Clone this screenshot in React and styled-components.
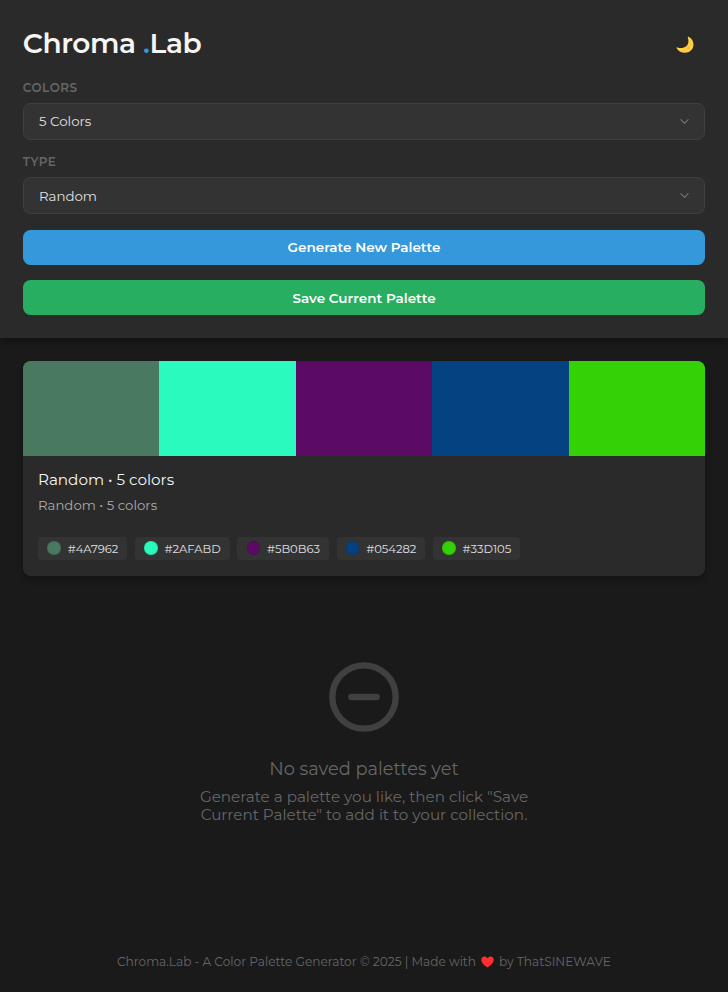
import React from 'react';
import styled, { createGlobalStyle } from 'styled-components';

const GlobalStyle = createGlobalStyle`
  * { box-sizing: border-box; }
  body {
    margin: 0;
    background: #1a1a1a;
    color: #f5f5f5;
    font-family: Montserrat, Inter, sans-serif;
  }
`;

const Page = styled.div`
  display: flex;
  flex-direction: column;
  height: 992px;
  overflow: hidden;
`;

const Header = styled.header`
  display: flex;
  flex-direction: column;
  gap: 14.7px;
  height: 338px;
  padding: 22.8px;
  background: #2a2a2a;
  box-shadow: 0 4px 6px rgba(0, 0, 0, 0.3);
  flex: none;
`;

const TitleRow = styled.div`
  display: flex;
  align-items: center;
  justify-content: space-between;
  height: 42.2px;
`;

const Title = styled.h1`
  margin: 0;
  font-size: 28px;
  font-weight: 600;
  line-height: 40px;
  height: 42px;
  letter-spacing: -0.4px;
`;

const Accent = styled.span`
  color: #3498db;
`;

const ThemeButton = styled.button`
  display: grid;
  place-items: center;
  width: 41px;
  height: 40px;
  padding: 2px 0 0;
  border: 1px solid #292929;
  border-radius: 7.6px;
  background: transparent;
`;

const Field = styled.div`
  display: flex;
  flex-direction: column;
  gap: 7.9px;
`;

const Label = styled.label`
  font-size: 12px;
  font-weight: 600;
  line-height: 15px;
  letter-spacing: 0.5px;
  text-transform: uppercase;
  color: #666;
`;

const Select = styled.div`
  display: flex;
  align-items: center;
  justify-content: space-between;
  height: 37px;
  padding: 0 14px 0 15.2px;
  border: 1px solid #404040;
  border-radius: 7.6px;
  background: #333;
  color: #e0e0e0;
  font-size: 13.35px;
`;

const Button = styled.button`
  flex: none;
  height: 35.2px;
  padding: 0;
  border: 0;
  border-radius: 7.6px;
  background: ${(p) => p.$color};
  color: #fff;
  font-family: inherit;
  font-size: 13.55px;
  font-weight: 600;
`;

const Actions = styled.div`
  display: flex;
  flex-direction: column;
  gap: 15px;
  padding-top: 0.9px;
`;

const Main = styled.main`
  flex: 1;
  padding: 22.8px 22.8px 0;
`;

const Card = styled.article`
  height: 214.9px;
  overflow: hidden;
  border-radius: 7.6px;
  background: #2a2a2a;
  box-shadow: 0 4px 6px rgba(0, 0, 0, 0.3);
`;

const Swatches = styled.div`
  display: flex;
  height: 95px;
`;

const Swatch = styled.div`
  flex: 1;
  background: ${(p) => p.$color};
`;

const CardBody = styled.div`
  padding: 15.2px;
`;

const CardTitle = styled.h2`
  margin: 0;
  font-size: 15.2px;
  font-weight: 450;
  line-height: 18px;
`;

const CardMeta = styled.p`
  margin: 8px 0 0;
  font-size: 13.3px;
  line-height: 16px;
  color: #aaa;
`;

const Chips = styled.div`
  display: flex;
  gap: 7.6px;
  margin-top: 23.9px;
`;

const Chip = styled.div`
  display: flex;
  align-items: center;
  gap: 7px;
  height: 23.3px;
  padding: 1px 9px 0 9.4px;
  border-radius: 3.8px;
  background: #333;
  color: #e0e0e0;
  font-size: 11.5px;
`;

const Dot = styled.span`
  width: 13.3px;
  height: 13.3px;
  margin-top: -1.8px;
  border: 1px solid rgba(0, 0, 0, 0.1);
  border-radius: 50%;
  background: ${(p) => p.$color};
`;

const Empty = styled.section`
  display: flex;
  flex-direction: column;
  align-items: center;
  padding-top: 83.4px;
  color: #666;
  text-align: center;
`;

const EmptyTitle = styled.h3`
  margin: 23px 0 0;
  font-size: 17.8px;
  font-weight: 400;
  line-height: 22px;
`;

const EmptyText = styled.p`
  width: 380px;
  margin: 8px 0 0;
  font-size: 15.2px;
  font-weight: 400;
  line-height: 18px;
`;

const Footer = styled.footer`
  display: flex;
  align-items: center;
  justify-content: center;
  gap: 5px;
  height: 60px;
  padding-bottom: 1px;
  flex: none;
  color: #666;
  font-size: 12.17px;
`;

const Moon = () => (
  <svg width="18" height="18" viewBox="0 0 18 18">
    <path d="M12.6.8C17.7 3.3 18.7 9.2 16 13.2 12.5 18.2 4.2 18.1.6 12.2c-.3-.6.1-1 .7-.8 3.4 1 6.6.7 8.9-1.2 2.5-2.1 2.7-5.3 1.6-8.6-.2-.6.2-1.1.8-.8Z" fill="#ffd045" />
    <circle cx="12.3" cy="12" r="1.5" fill="#f7bd38" />
    <circle cx="8.3" cy="14.2" r=".8" fill="#f7bd38" />
    <circle cx="15" cy="8.3" r=".8" fill="#f7bd38" />
  </svg>
);

const Chevron = () => (
  <svg width="11" height="11" viewBox="0 0 24 24" fill="none" stroke="#777" strokeWidth="2.3" strokeLinecap="round" strokeLinejoin="round">
    <path d="m4 8 8 8 8-8" />
  </svg>
);

const MinusCircle = () => (
  <svg width="76" height="76" viewBox="0 0 24 24" fill="none" stroke="#404040" strokeWidth="2" strokeLinecap="round">
    <circle cx="12" cy="12" r="10" />
    <path d="M8 12h8" />
  </svg>
);

const Heart = () => (
  <svg width="13" height="12" viewBox="0 0 13 12">
    <path d="M6.5 11.5C4 9.8.3 6.8.3 3.7.3.7 4.3-.7 6.5 2.2 8.7-.7 12.7.7 12.7 3.7c0 3.1-3.7 6.1-6.2 7.8Z" fill="#ff2f2f" />
  </svg>
);

const colors = ['#4A7962', '#2AFABD', '#5B0B63', '#054282', '#33D105'];

export default function App() {
  return (
    <Page>
      <GlobalStyle />
      <Header>
        <TitleRow>
          <Title>Chroma <Accent>.</Accent>Lab</Title>
          <ThemeButton aria-label="Toggle theme"><Moon /></ThemeButton>
        </TitleRow>
        <Field>
          <Label>Colors</Label>
          <Select>5 Colors<Chevron /></Select>
        </Field>
        <Field>
          <Label>Type</Label>
          <Select>Random<Chevron /></Select>
        </Field>
        <Actions>
          <Button $color="#3498db">Generate New Palette</Button>
          <Button $color="#27ae60">Save Current Palette</Button>
        </Actions>
      </Header>
      <Main>
        <Card>
          <Swatches>
            {colors.map((c) => <Swatch key={c} $color={c} />)}
          </Swatches>
          <CardBody>
            <CardTitle>Random • 5 colors</CardTitle>
            <CardMeta>Random • 5 colors</CardMeta>
            <Chips>
              {colors.map((c) => <Chip key={c}><Dot $color={c} />{c}</Chip>)}
            </Chips>
          </CardBody>
        </Card>
        <Empty>
          <MinusCircle />
          <EmptyTitle>No saved palettes yet</EmptyTitle>
          <EmptyText>
            Generate a palette you like, then click "Save<br />
            Current Palette" to add it to your collection.
          </EmptyText>
        </Empty>
      </Main>
      <Footer>
        <span>Chroma.Lab - A Color Palette Generator © 2025 | Made with</span>
        <Heart />
        <span>by ThatSINEWAVE</span>
      </Footer>
    </Page>
  );
}
